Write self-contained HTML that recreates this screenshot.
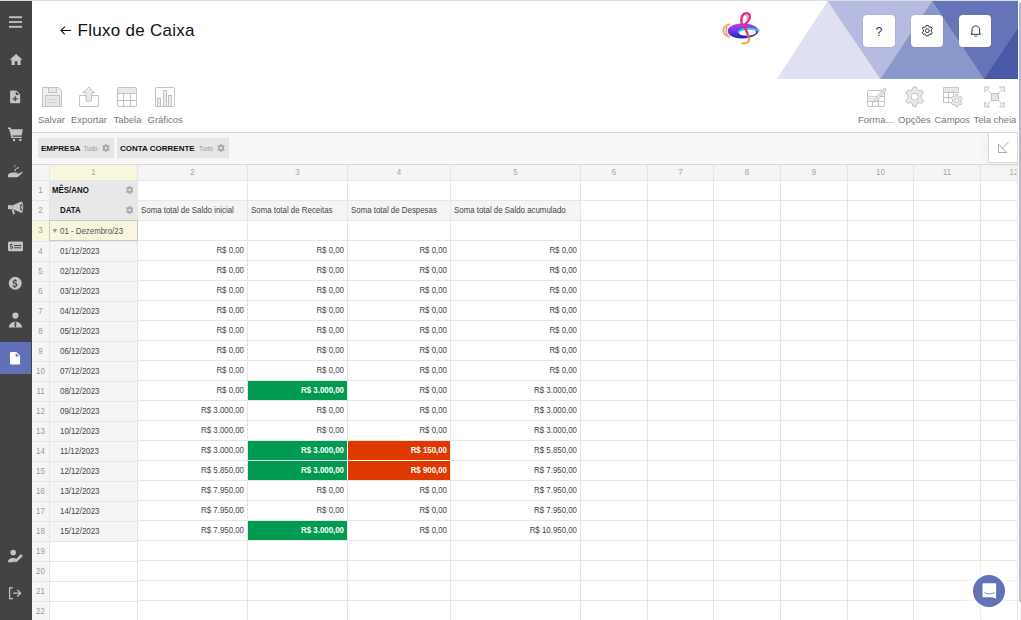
<!DOCTYPE html><html><head><meta charset="utf-8"><style>*{margin:0;padding:0;box-sizing:border-box}
html,body{width:1021px;height:620px;overflow:hidden;background:#fff;font-family:"Liberation Sans",sans-serif}
.abs{position:absolute}
#topline{position:absolute;left:0;top:0;width:1021px;height:1px;background:#dcdde0}
#side{position:absolute;left:0;top:1px;width:32px;height:619px;background:#434343}
#side svg{position:absolute;overflow:visible}
#scroll{position:absolute;left:1019px;top:2px;width:2px;height:600px;background:#bcbcc4;border-radius:1px}
.title{position:absolute;left:77.5px;top:21px;font-size:17px;letter-spacing:0.28px;color:#111;white-space:nowrap}
.hbtn{position:absolute;top:15px;width:31.5px;height:31.5px;background:#fff;border-radius:4px;box-shadow:0 0 0 0.6px rgba(120,100,80,0.18)}
.tb{position:absolute;top:114px;font-size:9.5px;color:#777;white-space:nowrap}
#filter{position:absolute;left:32px;top:133px;width:986px;height:31px;background:#f7f7f7}
#tbline{position:absolute;left:32px;top:132px;width:986px;height:1px;background:#d9d9d9}
.chip{position:absolute;top:5px;height:20px;background:#e6e6e6}
.chip b{position:absolute;top:6px;font-size:8px;color:#111;white-space:nowrap}
.chip i{position:absolute;top:7px;font-style:normal;font-size:6.3px;color:#999;white-space:nowrap}
.c{position:absolute;font-size:8px;color:#444;white-space:nowrap;line-height:20px;height:20px;overflow:hidden;transform:scale(0.985,1.15);transform-origin:0 13.5px}
</style></head><body>
<div id="topline"></div>
<div id="gridwrap"><div class="abs" style="left:32px;top:165px;width:986px;height:15px;background:#f5f5f5;"></div><div class="abs" style="left:32px;top:165px;width:17px;height:455px;background:#f5f5f5;"></div><div class="abs" style="left:50px;top:165px;width:87px;height:15px;background:#f8f6dc;"></div><div class="abs" style="left:32px;top:221px;width:17px;height:19px;background:#f8f6dc;"></div><div class="abs" style="left:138px;top:201px;width:442px;height:19px;background:#f5f5f5;"></div><div class="abs" style="left:50px;top:242px;width:87px;height:299px;background:#f5f5f5;"></div><div class="abs" style="left:49px;top:165px;width:1px;height:455px;background:#e6e6e6;"></div><div class="abs" style="left:137px;top:165px;width:1px;height:455px;background:#e6e6e6;"></div><div class="abs" style="left:247px;top:165px;width:1px;height:455px;background:#e6e6e6;"></div><div class="abs" style="left:347px;top:165px;width:1px;height:455px;background:#e6e6e6;"></div><div class="abs" style="left:450px;top:165px;width:1px;height:455px;background:#e6e6e6;"></div><div class="abs" style="left:580px;top:165px;width:1px;height:455px;background:#e6e6e6;"></div><div class="abs" style="left:647px;top:165px;width:1px;height:455px;background:#e6e6e6;"></div><div class="abs" style="left:713px;top:165px;width:1px;height:455px;background:#e6e6e6;"></div><div class="abs" style="left:780px;top:165px;width:1px;height:455px;background:#e6e6e6;"></div><div class="abs" style="left:847px;top:165px;width:1px;height:455px;background:#e6e6e6;"></div><div class="abs" style="left:913px;top:165px;width:1px;height:455px;background:#e6e6e6;"></div><div class="abs" style="left:980px;top:165px;width:1px;height:455px;background:#e6e6e6;"></div><div class="abs" style="left:1017px;top:165px;width:1px;height:455px;background:#e6e6e6;"></div><div class="abs" style="left:138px;top:180px;width:880px;height:1px;background:#e6e6e6;"></div><div class="abs" style="left:32px;top:180px;width:105px;height:1px;background:#e6e6e6;"></div><div class="abs" style="left:138px;top:200px;width:880px;height:1px;background:#e6e6e6;"></div><div class="abs" style="left:32px;top:200px;width:105px;height:1px;background:#e6e6e6;"></div><div class="abs" style="left:138px;top:220px;width:880px;height:1px;background:#e6e6e6;"></div><div class="abs" style="left:32px;top:220px;width:105px;height:1px;background:#e6e6e6;"></div><div class="abs" style="left:138px;top:240px;width:880px;height:1px;background:#e6e6e6;"></div><div class="abs" style="left:32px;top:241px;width:105px;height:1px;background:#e6e6e6;"></div><div class="abs" style="left:138px;top:260px;width:880px;height:1px;background:#e6e6e6;"></div><div class="abs" style="left:32px;top:261px;width:105px;height:1px;background:#e6e6e6;"></div><div class="abs" style="left:138px;top:280px;width:880px;height:1px;background:#e6e6e6;"></div><div class="abs" style="left:32px;top:281px;width:105px;height:1px;background:#e6e6e6;"></div><div class="abs" style="left:138px;top:300px;width:880px;height:1px;background:#e6e6e6;"></div><div class="abs" style="left:32px;top:301px;width:105px;height:1px;background:#e6e6e6;"></div><div class="abs" style="left:138px;top:320px;width:880px;height:1px;background:#e6e6e6;"></div><div class="abs" style="left:32px;top:321px;width:105px;height:1px;background:#e6e6e6;"></div><div class="abs" style="left:138px;top:340px;width:880px;height:1px;background:#e6e6e6;"></div><div class="abs" style="left:32px;top:341px;width:105px;height:1px;background:#e6e6e6;"></div><div class="abs" style="left:138px;top:360px;width:880px;height:1px;background:#e6e6e6;"></div><div class="abs" style="left:32px;top:361px;width:105px;height:1px;background:#e6e6e6;"></div><div class="abs" style="left:138px;top:380px;width:880px;height:1px;background:#e6e6e6;"></div><div class="abs" style="left:32px;top:381px;width:105px;height:1px;background:#e6e6e6;"></div><div class="abs" style="left:138px;top:400px;width:880px;height:1px;background:#e6e6e6;"></div><div class="abs" style="left:32px;top:401px;width:105px;height:1px;background:#e6e6e6;"></div><div class="abs" style="left:138px;top:420px;width:880px;height:1px;background:#e6e6e6;"></div><div class="abs" style="left:32px;top:421px;width:105px;height:1px;background:#e6e6e6;"></div><div class="abs" style="left:138px;top:440px;width:880px;height:1px;background:#e6e6e6;"></div><div class="abs" style="left:32px;top:441px;width:105px;height:1px;background:#e6e6e6;"></div><div class="abs" style="left:138px;top:460px;width:880px;height:1px;background:#e6e6e6;"></div><div class="abs" style="left:32px;top:461px;width:105px;height:1px;background:#e6e6e6;"></div><div class="abs" style="left:138px;top:480px;width:880px;height:1px;background:#e6e6e6;"></div><div class="abs" style="left:32px;top:481px;width:105px;height:1px;background:#e6e6e6;"></div><div class="abs" style="left:138px;top:500px;width:880px;height:1px;background:#e6e6e6;"></div><div class="abs" style="left:32px;top:501px;width:105px;height:1px;background:#e6e6e6;"></div><div class="abs" style="left:138px;top:520px;width:880px;height:1px;background:#e6e6e6;"></div><div class="abs" style="left:32px;top:521px;width:105px;height:1px;background:#e6e6e6;"></div><div class="abs" style="left:138px;top:540px;width:880px;height:1px;background:#e6e6e6;"></div><div class="abs" style="left:32px;top:541px;width:105px;height:1px;background:#e6e6e6;"></div><div class="abs" style="left:138px;top:560px;width:880px;height:1px;background:#e6e6e6;"></div><div class="abs" style="left:32px;top:561px;width:105px;height:1px;background:#e6e6e6;"></div><div class="abs" style="left:138px;top:580px;width:880px;height:1px;background:#e6e6e6;"></div><div class="abs" style="left:32px;top:581px;width:105px;height:1px;background:#e6e6e6;"></div><div class="abs" style="left:138px;top:600px;width:880px;height:1px;background:#e6e6e6;"></div><div class="abs" style="left:32px;top:601px;width:105px;height:1px;background:#e6e6e6;"></div><div class="abs" style="left:138px;top:620px;width:880px;height:1px;background:#e6e6e6;"></div><div class="abs" style="left:32px;top:621px;width:105px;height:1px;background:#e6e6e6;"></div><div class="abs" style="left:32px;top:164px;width:986px;height:1px;background:#d8d8d8;"></div><div class="abs" style="left:50px;top:181px;width:87px;height:40px;background:#e8e8e8;"></div><div class="abs" style="left:49px;top:220px;width:89px;height:21px;background:#c9c9c9;"></div><div class="abs" style="left:50px;top:221px;width:87px;height:19px;background:#f8f6dc;"></div><div class="abs" style="left:248px;top:381px;width:99px;height:19px;background:#009a50;"></div><div class="abs" style="left:248px;top:441px;width:99px;height:19px;background:#009a50;"></div><div class="abs" style="left:248px;top:461px;width:99px;height:19px;background:#009a50;"></div><div class="abs" style="left:248px;top:521px;width:99px;height:19px;background:#009a50;"></div><div class="abs" style="left:348px;top:441px;width:102px;height:19px;background:#de3a00;"></div><div class="abs" style="left:348px;top:461px;width:102px;height:19px;background:#de3a00;"></div><div class="abs" style="left:347px;top:441px;width:1px;height:39px;background:#fff;"></div><div class="abs" style="left:248px;top:460px;width:202px;height:1px;background:#fff;"></div><div class="c" style="left:50px;top:163px;width:87px;text-align:center;color:#a4a4a4;font-weight:normal;font-size:8px;transform-origin:50% 13.5px">1</div><div class="c" style="left:138px;top:163px;width:109px;text-align:center;color:#a4a4a4;font-weight:normal;font-size:8px;transform-origin:50% 13.5px">2</div><div class="c" style="left:248px;top:163px;width:99px;text-align:center;color:#a4a4a4;font-weight:normal;font-size:8px;transform-origin:50% 13.5px">3</div><div class="c" style="left:348px;top:163px;width:102px;text-align:center;color:#a4a4a4;font-weight:normal;font-size:8px;transform-origin:50% 13.5px">4</div><div class="c" style="left:451px;top:163px;width:129px;text-align:center;color:#a4a4a4;font-weight:normal;font-size:8px;transform-origin:50% 13.5px">5</div><div class="c" style="left:581px;top:163px;width:66px;text-align:center;color:#a4a4a4;font-weight:normal;font-size:8px;transform-origin:50% 13.5px">6</div><div class="c" style="left:648px;top:163px;width:65px;text-align:center;color:#a4a4a4;font-weight:normal;font-size:8px;transform-origin:50% 13.5px">7</div><div class="c" style="left:714px;top:163px;width:66px;text-align:center;color:#a4a4a4;font-weight:normal;font-size:8px;transform-origin:50% 13.5px">8</div><div class="c" style="left:781px;top:163px;width:66px;text-align:center;color:#a4a4a4;font-weight:normal;font-size:8px;transform-origin:50% 13.5px">9</div><div class="c" style="left:848px;top:163px;width:65px;text-align:center;color:#a4a4a4;font-weight:normal;font-size:8px;transform-origin:50% 13.5px">10</div><div class="c" style="left:914px;top:163px;width:66px;text-align:center;color:#a4a4a4;font-weight:normal;font-size:8px;transform-origin:50% 13.5px">11</div><div class="c" style="left:981px;top:163px;width:36px;text-align:left;color:#a4a4a4;font-weight:normal;font-size:8px;transform-origin:0 13.5px"><span style='position:absolute;left:29px'>12</span></div><div class="c" style="left:32px;top:181px;width:17px;text-align:center;color:#999;font-weight:normal;font-size:8px;transform-origin:50% 13.5px">1</div><div class="c" style="left:32px;top:201px;width:17px;text-align:center;color:#999;font-weight:normal;font-size:8px;transform-origin:50% 13.5px">2</div><div class="c" style="left:32px;top:221px;width:17px;text-align:center;color:#999;font-weight:normal;font-size:8px;transform-origin:50% 13.5px">3</div><div class="c" style="left:32px;top:242px;width:17px;text-align:center;color:#999;font-weight:normal;font-size:8px;transform-origin:50% 13.5px">4</div><div class="c" style="left:32px;top:262px;width:17px;text-align:center;color:#999;font-weight:normal;font-size:8px;transform-origin:50% 13.5px">5</div><div class="c" style="left:32px;top:282px;width:17px;text-align:center;color:#999;font-weight:normal;font-size:8px;transform-origin:50% 13.5px">6</div><div class="c" style="left:32px;top:302px;width:17px;text-align:center;color:#999;font-weight:normal;font-size:8px;transform-origin:50% 13.5px">7</div><div class="c" style="left:32px;top:322px;width:17px;text-align:center;color:#999;font-weight:normal;font-size:8px;transform-origin:50% 13.5px">8</div><div class="c" style="left:32px;top:342px;width:17px;text-align:center;color:#999;font-weight:normal;font-size:8px;transform-origin:50% 13.5px">9</div><div class="c" style="left:32px;top:362px;width:17px;text-align:center;color:#999;font-weight:normal;font-size:8px;transform-origin:50% 13.5px">10</div><div class="c" style="left:32px;top:382px;width:17px;text-align:center;color:#999;font-weight:normal;font-size:8px;transform-origin:50% 13.5px">11</div><div class="c" style="left:32px;top:402px;width:17px;text-align:center;color:#999;font-weight:normal;font-size:8px;transform-origin:50% 13.5px">12</div><div class="c" style="left:32px;top:422px;width:17px;text-align:center;color:#999;font-weight:normal;font-size:8px;transform-origin:50% 13.5px">13</div><div class="c" style="left:32px;top:442px;width:17px;text-align:center;color:#999;font-weight:normal;font-size:8px;transform-origin:50% 13.5px">14</div><div class="c" style="left:32px;top:462px;width:17px;text-align:center;color:#999;font-weight:normal;font-size:8px;transform-origin:50% 13.5px">15</div><div class="c" style="left:32px;top:482px;width:17px;text-align:center;color:#999;font-weight:normal;font-size:8px;transform-origin:50% 13.5px">16</div><div class="c" style="left:32px;top:502px;width:17px;text-align:center;color:#999;font-weight:normal;font-size:8px;transform-origin:50% 13.5px">17</div><div class="c" style="left:32px;top:522px;width:17px;text-align:center;color:#999;font-weight:normal;font-size:8px;transform-origin:50% 13.5px">18</div><div class="c" style="left:32px;top:542px;width:17px;text-align:center;color:#999;font-weight:normal;font-size:8px;transform-origin:50% 13.5px">19</div><div class="c" style="left:32px;top:562px;width:17px;text-align:center;color:#999;font-weight:normal;font-size:8px;transform-origin:50% 13.5px">20</div><div class="c" style="left:32px;top:582px;width:17px;text-align:center;color:#999;font-weight:normal;font-size:8px;transform-origin:50% 13.5px">21</div><div class="c" style="left:32px;top:602px;width:17px;text-align:center;color:#999;font-weight:normal;font-size:8px;transform-origin:50% 13.5px">22</div><div class="c" style="left:52px;top:181px;width:70px;text-align:left;color:#111;font-weight:bold;font-size:8px;transform-origin:0 13.5px">MÊS/ANO</div><div class="c" style="left:60px;top:201px;width:60px;text-align:left;color:#111;font-weight:bold;font-size:8px;transform-origin:0 13.5px">DATA</div><div class="c" style="left:141px;top:201px;width:106px;text-align:left;color:#444;font-weight:normal;font-size:8px;transform-origin:0 13.5px">Soma total de Saldo inicial</div><div class="c" style="left:251px;top:201px;width:96px;text-align:left;color:#444;font-weight:normal;font-size:8px;transform-origin:0 13.5px">Soma total de Receitas</div><div class="c" style="left:351px;top:201px;width:99px;text-align:left;color:#444;font-weight:normal;font-size:8px;transform-origin:0 13.5px">Soma total de Despesas</div><div class="c" style="left:454px;top:201px;width:126px;text-align:left;color:#444;font-weight:normal;font-size:8px;transform-origin:0 13.5px">Soma total de Saldo acumulado</div><div class="c" style="left:60px;top:222px;width:76px;text-align:left;color:#555;font-weight:normal;font-size:8px;transform-origin:0 13.5px">01 - Dezembro/23</div><div class="c" style="left:60px;top:242px;width:76px;text-align:left;color:#444;font-weight:normal;font-size:8px;transform-origin:0 13.5px">01/12/2023</div><div class="c" style="left:138px;top:241px;width:106px;text-align:right;color:#444;font-weight:normal;font-size:8px;transform-origin:100% 13.5px">R$ 0,00</div><div class="c" style="left:248px;top:241px;width:96px;text-align:right;color:#444;font-weight:normal;font-size:8px;transform-origin:100% 13.5px">R$ 0,00</div><div class="c" style="left:348px;top:241px;width:99px;text-align:right;color:#444;font-weight:normal;font-size:8px;transform-origin:100% 13.5px">R$ 0,00</div><div class="c" style="left:451px;top:241px;width:126px;text-align:right;color:#444;font-weight:normal;font-size:8px;transform-origin:100% 13.5px">R$ 0,00</div><div class="c" style="left:60px;top:262px;width:76px;text-align:left;color:#444;font-weight:normal;font-size:8px;transform-origin:0 13.5px">02/12/2023</div><div class="c" style="left:138px;top:261px;width:106px;text-align:right;color:#444;font-weight:normal;font-size:8px;transform-origin:100% 13.5px">R$ 0,00</div><div class="c" style="left:248px;top:261px;width:96px;text-align:right;color:#444;font-weight:normal;font-size:8px;transform-origin:100% 13.5px">R$ 0,00</div><div class="c" style="left:348px;top:261px;width:99px;text-align:right;color:#444;font-weight:normal;font-size:8px;transform-origin:100% 13.5px">R$ 0,00</div><div class="c" style="left:451px;top:261px;width:126px;text-align:right;color:#444;font-weight:normal;font-size:8px;transform-origin:100% 13.5px">R$ 0,00</div><div class="c" style="left:60px;top:282px;width:76px;text-align:left;color:#444;font-weight:normal;font-size:8px;transform-origin:0 13.5px">03/12/2023</div><div class="c" style="left:138px;top:281px;width:106px;text-align:right;color:#444;font-weight:normal;font-size:8px;transform-origin:100% 13.5px">R$ 0,00</div><div class="c" style="left:248px;top:281px;width:96px;text-align:right;color:#444;font-weight:normal;font-size:8px;transform-origin:100% 13.5px">R$ 0,00</div><div class="c" style="left:348px;top:281px;width:99px;text-align:right;color:#444;font-weight:normal;font-size:8px;transform-origin:100% 13.5px">R$ 0,00</div><div class="c" style="left:451px;top:281px;width:126px;text-align:right;color:#444;font-weight:normal;font-size:8px;transform-origin:100% 13.5px">R$ 0,00</div><div class="c" style="left:60px;top:302px;width:76px;text-align:left;color:#444;font-weight:normal;font-size:8px;transform-origin:0 13.5px">04/12/2023</div><div class="c" style="left:138px;top:301px;width:106px;text-align:right;color:#444;font-weight:normal;font-size:8px;transform-origin:100% 13.5px">R$ 0,00</div><div class="c" style="left:248px;top:301px;width:96px;text-align:right;color:#444;font-weight:normal;font-size:8px;transform-origin:100% 13.5px">R$ 0,00</div><div class="c" style="left:348px;top:301px;width:99px;text-align:right;color:#444;font-weight:normal;font-size:8px;transform-origin:100% 13.5px">R$ 0,00</div><div class="c" style="left:451px;top:301px;width:126px;text-align:right;color:#444;font-weight:normal;font-size:8px;transform-origin:100% 13.5px">R$ 0,00</div><div class="c" style="left:60px;top:322px;width:76px;text-align:left;color:#444;font-weight:normal;font-size:8px;transform-origin:0 13.5px">05/12/2023</div><div class="c" style="left:138px;top:321px;width:106px;text-align:right;color:#444;font-weight:normal;font-size:8px;transform-origin:100% 13.5px">R$ 0,00</div><div class="c" style="left:248px;top:321px;width:96px;text-align:right;color:#444;font-weight:normal;font-size:8px;transform-origin:100% 13.5px">R$ 0,00</div><div class="c" style="left:348px;top:321px;width:99px;text-align:right;color:#444;font-weight:normal;font-size:8px;transform-origin:100% 13.5px">R$ 0,00</div><div class="c" style="left:451px;top:321px;width:126px;text-align:right;color:#444;font-weight:normal;font-size:8px;transform-origin:100% 13.5px">R$ 0,00</div><div class="c" style="left:60px;top:342px;width:76px;text-align:left;color:#444;font-weight:normal;font-size:8px;transform-origin:0 13.5px">06/12/2023</div><div class="c" style="left:138px;top:341px;width:106px;text-align:right;color:#444;font-weight:normal;font-size:8px;transform-origin:100% 13.5px">R$ 0,00</div><div class="c" style="left:248px;top:341px;width:96px;text-align:right;color:#444;font-weight:normal;font-size:8px;transform-origin:100% 13.5px">R$ 0,00</div><div class="c" style="left:348px;top:341px;width:99px;text-align:right;color:#444;font-weight:normal;font-size:8px;transform-origin:100% 13.5px">R$ 0,00</div><div class="c" style="left:451px;top:341px;width:126px;text-align:right;color:#444;font-weight:normal;font-size:8px;transform-origin:100% 13.5px">R$ 0,00</div><div class="c" style="left:60px;top:362px;width:76px;text-align:left;color:#444;font-weight:normal;font-size:8px;transform-origin:0 13.5px">07/12/2023</div><div class="c" style="left:138px;top:361px;width:106px;text-align:right;color:#444;font-weight:normal;font-size:8px;transform-origin:100% 13.5px">R$ 0,00</div><div class="c" style="left:248px;top:361px;width:96px;text-align:right;color:#444;font-weight:normal;font-size:8px;transform-origin:100% 13.5px">R$ 0,00</div><div class="c" style="left:348px;top:361px;width:99px;text-align:right;color:#444;font-weight:normal;font-size:8px;transform-origin:100% 13.5px">R$ 0,00</div><div class="c" style="left:451px;top:361px;width:126px;text-align:right;color:#444;font-weight:normal;font-size:8px;transform-origin:100% 13.5px">R$ 0,00</div><div class="c" style="left:60px;top:382px;width:76px;text-align:left;color:#444;font-weight:normal;font-size:8px;transform-origin:0 13.5px">08/12/2023</div><div class="c" style="left:138px;top:381px;width:106px;text-align:right;color:#444;font-weight:normal;font-size:8px;transform-origin:100% 13.5px">R$ 0,00</div><div class="c" style="left:248px;top:381px;width:96px;text-align:right;color:#fff;font-weight:bold;font-size:8px;transform-origin:100% 13.5px">R$ 3.000,00</div><div class="c" style="left:348px;top:381px;width:99px;text-align:right;color:#444;font-weight:normal;font-size:8px;transform-origin:100% 13.5px">R$ 0,00</div><div class="c" style="left:451px;top:381px;width:126px;text-align:right;color:#444;font-weight:normal;font-size:8px;transform-origin:100% 13.5px">R$ 3.000,00</div><div class="c" style="left:60px;top:402px;width:76px;text-align:left;color:#444;font-weight:normal;font-size:8px;transform-origin:0 13.5px">09/12/2023</div><div class="c" style="left:138px;top:401px;width:106px;text-align:right;color:#444;font-weight:normal;font-size:8px;transform-origin:100% 13.5px">R$ 3.000,00</div><div class="c" style="left:248px;top:401px;width:96px;text-align:right;color:#444;font-weight:normal;font-size:8px;transform-origin:100% 13.5px">R$ 0,00</div><div class="c" style="left:348px;top:401px;width:99px;text-align:right;color:#444;font-weight:normal;font-size:8px;transform-origin:100% 13.5px">R$ 0,00</div><div class="c" style="left:451px;top:401px;width:126px;text-align:right;color:#444;font-weight:normal;font-size:8px;transform-origin:100% 13.5px">R$ 3.000,00</div><div class="c" style="left:60px;top:422px;width:76px;text-align:left;color:#444;font-weight:normal;font-size:8px;transform-origin:0 13.5px">10/12/2023</div><div class="c" style="left:138px;top:421px;width:106px;text-align:right;color:#444;font-weight:normal;font-size:8px;transform-origin:100% 13.5px">R$ 3.000,00</div><div class="c" style="left:248px;top:421px;width:96px;text-align:right;color:#444;font-weight:normal;font-size:8px;transform-origin:100% 13.5px">R$ 0,00</div><div class="c" style="left:348px;top:421px;width:99px;text-align:right;color:#444;font-weight:normal;font-size:8px;transform-origin:100% 13.5px">R$ 0,00</div><div class="c" style="left:451px;top:421px;width:126px;text-align:right;color:#444;font-weight:normal;font-size:8px;transform-origin:100% 13.5px">R$ 3.000,00</div><div class="c" style="left:60px;top:442px;width:76px;text-align:left;color:#444;font-weight:normal;font-size:8px;transform-origin:0 13.5px">11/12/2023</div><div class="c" style="left:138px;top:441px;width:106px;text-align:right;color:#444;font-weight:normal;font-size:8px;transform-origin:100% 13.5px">R$ 3.000,00</div><div class="c" style="left:248px;top:441px;width:96px;text-align:right;color:#fff;font-weight:bold;font-size:8px;transform-origin:100% 13.5px">R$ 3.000,00</div><div class="c" style="left:348px;top:441px;width:99px;text-align:right;color:#fff;font-weight:bold;font-size:8px;transform-origin:100% 13.5px">R$ 150,00</div><div class="c" style="left:451px;top:441px;width:126px;text-align:right;color:#444;font-weight:normal;font-size:8px;transform-origin:100% 13.5px">R$ 5.850,00</div><div class="c" style="left:60px;top:462px;width:76px;text-align:left;color:#444;font-weight:normal;font-size:8px;transform-origin:0 13.5px">12/12/2023</div><div class="c" style="left:138px;top:461px;width:106px;text-align:right;color:#444;font-weight:normal;font-size:8px;transform-origin:100% 13.5px">R$ 5.850,00</div><div class="c" style="left:248px;top:461px;width:96px;text-align:right;color:#fff;font-weight:bold;font-size:8px;transform-origin:100% 13.5px">R$ 3.000,00</div><div class="c" style="left:348px;top:461px;width:99px;text-align:right;color:#fff;font-weight:bold;font-size:8px;transform-origin:100% 13.5px">R$ 900,00</div><div class="c" style="left:451px;top:461px;width:126px;text-align:right;color:#444;font-weight:normal;font-size:8px;transform-origin:100% 13.5px">R$ 7.950,00</div><div class="c" style="left:60px;top:482px;width:76px;text-align:left;color:#444;font-weight:normal;font-size:8px;transform-origin:0 13.5px">13/12/2023</div><div class="c" style="left:138px;top:481px;width:106px;text-align:right;color:#444;font-weight:normal;font-size:8px;transform-origin:100% 13.5px">R$ 7.950,00</div><div class="c" style="left:248px;top:481px;width:96px;text-align:right;color:#444;font-weight:normal;font-size:8px;transform-origin:100% 13.5px">R$ 0,00</div><div class="c" style="left:348px;top:481px;width:99px;text-align:right;color:#444;font-weight:normal;font-size:8px;transform-origin:100% 13.5px">R$ 0,00</div><div class="c" style="left:451px;top:481px;width:126px;text-align:right;color:#444;font-weight:normal;font-size:8px;transform-origin:100% 13.5px">R$ 7.950,00</div><div class="c" style="left:60px;top:502px;width:76px;text-align:left;color:#444;font-weight:normal;font-size:8px;transform-origin:0 13.5px">14/12/2023</div><div class="c" style="left:138px;top:501px;width:106px;text-align:right;color:#444;font-weight:normal;font-size:8px;transform-origin:100% 13.5px">R$ 7.950,00</div><div class="c" style="left:248px;top:501px;width:96px;text-align:right;color:#444;font-weight:normal;font-size:8px;transform-origin:100% 13.5px">R$ 0,00</div><div class="c" style="left:348px;top:501px;width:99px;text-align:right;color:#444;font-weight:normal;font-size:8px;transform-origin:100% 13.5px">R$ 0,00</div><div class="c" style="left:451px;top:501px;width:126px;text-align:right;color:#444;font-weight:normal;font-size:8px;transform-origin:100% 13.5px">R$ 7.950,00</div><div class="c" style="left:60px;top:522px;width:76px;text-align:left;color:#444;font-weight:normal;font-size:8px;transform-origin:0 13.5px">15/12/2023</div><div class="c" style="left:138px;top:521px;width:106px;text-align:right;color:#444;font-weight:normal;font-size:8px;transform-origin:100% 13.5px">R$ 7.950,00</div><div class="c" style="left:248px;top:521px;width:96px;text-align:right;color:#fff;font-weight:bold;font-size:8px;transform-origin:100% 13.5px">R$ 3.000,00</div><div class="c" style="left:348px;top:521px;width:99px;text-align:right;color:#444;font-weight:normal;font-size:8px;transform-origin:100% 13.5px">R$ 0,00</div><div class="c" style="left:451px;top:521px;width:126px;text-align:right;color:#444;font-weight:normal;font-size:8px;transform-origin:100% 13.5px">R$ 10.950,00</div></div>
<div id="side"></div>
<svg class="abs" style="left:0;top:0" width="1021" height="620" viewBox="0 0 1021 620">
 <!-- header triangles -->
 <g>
  <polygon points="827.6,1 1018,1 1018,79 853,79" fill="#b6bbe1"/>
  <polygon points="827.6,1 776.9,79 880.4,79" fill="#dfe0f1"/>
  <polygon points="932.3,1 1018,1 1018,79 880.4,79" fill="#8a97cb"/>
  <polygon points="932.3,1 1018,1 1018,79 984.2,79" fill="#6574b9"/>
  <polygon points="1036,1 984.2,79 1088,79" fill="#4a59a7"/>
  <rect x="1018" y="0" width="10" height="90" fill="#fff"/>
 </g>
 <!-- sidebar active -->
 <rect x="0" y="342" width="31" height="32" fill="#6270b8"/>
 <g fill="#c4c4c4">
  <!-- hamburger -->
  <rect x="9" y="16.3" width="13" height="1.8"/>
  <rect x="9" y="21.1" width="13" height="1.8"/>
  <rect x="9" y="25.9" width="13" height="1.8"/>
  <!-- home -->
  <path transform="translate(8.3,52.05) scale(0.65)" d="M10 20v-6h4v6h5v-8h3L12 3 2 12h3v8z"/>
  <!-- note add -->
  <path transform="translate(7.58,89.34) scale(0.63)" d="M14 2H6c-1.1 0-1.99.9-1.99 2L4 20c0 1.1.89 2 1.99 2H18c1.1 0 2-.9 2-2V8l-6-6zm2 14h-3v3h-2v-3H8v-2h3v-3h2v3h3v2zm-3-7V3.5L18.5 9H13z"/>
  <!-- cart -->
  <path d="M7.9 127.6h2.6l0.6 1.6h11.8l-1.3 6.3h-9.2l0.3 1.2h9v1.4h-10.2l-2.4-9.1h-1.2z"/>
  <circle cx="14" cy="140" r="1.2"/><circle cx="20.3" cy="140" r="1.2"/>
  <!-- hand with seedling -->
  <path d="M8 174.5c1.5-1.6 3.5-2.3 5.5-2h3.2c0.8 0 1.1 0.9 0.4 1.3l-2.6 0.3 3.8-0.3 3.3-1.9c0.7-0.3 1.2 0.4 0.8 0.9l-3.6 3.5c-0.6 0.6-1.4 0.9-2.3 0.9h-8.5z"/>
  <path d="M14.5 171.3c-0.3-1.3 0.3-2.3 1.6-2.6 0.3 1.3-0.3 2.3-1.6 2.6zM16.2 169c0.4-1.4 1.5-2.1 3-2-0.4 1.4-1.5 2.1-3 2zM14.8 167.5c-0.6-1-0.5-2.1 0.2-3.1 0.6 1 0.5 2.1-0.2 3.1z"/>
  <!-- megaphone -->
  <path d="M8 205.2h4.3v4h-4.3z"/>
  <path d="M12.3 205.4l8.9-3.8v11.2l-8.9-3.8z"/>
  <ellipse cx="21.2" cy="207.2" rx="2" ry="5.6"/>
  <ellipse cx="21.2" cy="207.2" rx="1.1" ry="3.4" fill="#434343"/>
  <ellipse cx="21.3" cy="207.2" rx="0.5" ry="2" fill="#c4c4c4"/>
  <path d="M11.5 209.5h2.2l1.2 4.6-1.6 0.5z"/>
  <!-- card -->
  <rect x="8" y="241.5" width="15" height="9.7" rx="1.5"/>
  <!-- dollar circle -->
  <circle cx="15.25" cy="283.25" r="6.45"/>
  <!-- person -->
  <circle cx="15.4" cy="315.6" r="3.1"/>
  <path d="M8.8 327.6c0-3.4 2.9-5.8 6.6-5.8s6.6 2.4 6.6 5.8z"/>
  <!-- user edit -->
  <circle cx="13.2" cy="552.6" r="2.8"/>
  <path d="M7.9 562.3c0-2.6 2.1-4.4 5.3-4.4 1.4 0 2.6 0.3 3.5 0.9l-3.1 3.5z"/>
  <path d="M14.6 562.3l0.4-2 6-6.2 1.8 1.8-6.2 6.1z"/>
  <!-- logout -->
  <path d="M9 587.3h4v1.2h-2.8v9.5h2.8v1.2h-4z"/>
  <path d="M13.2 592.6h5.9l-2.2-2.2 0.9-0.9 3.7 3.7-3.7 3.7-0.9-0.9 2.2-2.2h-5.9z"/>
 </g>
 <g fill="#434343">
  <!-- card details -->
  <path d="M11.3 243.3v0.8c-0.9 0.1-1.4 0.6-1.4 1.3 0 0.8 0.6 1.1 1.4 1.3 0.6 0.2 0.8 0.3 0.8 0.6s-0.3 0.5-0.8 0.5c-0.4 0-0.8-0.2-1.1-0.4l-0.4 0.7c0.3 0.2 0.7 0.4 1.1 0.4v0.8h0.7v-0.8c0.9-0.1 1.4-0.6 1.4-1.3 0-0.8-0.6-1.1-1.4-1.3-0.5-0.1-0.8-0.3-0.8-0.5 0-0.3 0.3-0.5 0.7-0.5 0.3 0 0.6 0.1 0.9 0.3l0.4-0.6c-0.3-0.2-0.6-0.3-1-0.4v-0.8z"/>
  <rect x="14" y="245" width="7.3" height="1"/>
  <rect x="14" y="247.3" width="7.3" height="1"/>
  <!-- dollar -->
  <path d="M14.7 278.8v1.1c-1.3 0.2-2.1 1-2.1 2 0 1.2 0.9 1.7 2.1 2 0.9 0.2 1.3 0.5 1.3 1s-0.5 0.8-1.2 0.8c-0.7 0-1.3-0.3-1.8-0.7l-0.6 1.1c0.5 0.4 1.2 0.7 1.8 0.8v1.1h1.1v-1.1c1.3-0.2 2.1-1 2.1-2.1 0-1.2-0.9-1.7-2.1-2-0.9-0.2-1.3-0.4-1.3-0.9 0-0.4 0.4-0.7 1-0.7 0.5 0 1 0.2 1.5 0.5l0.5-1c-0.4-0.3-1-0.5-1.5-0.6v-1.1z"/>
  <!-- person tie -->
  <path d="M14.8 322.2h1.2l0.4 1.2-0.5 3.8h-1l-0.5-3.8z"/>
  <path d="M9.6 327.6l0.8-2.4 1 2.4zM21.2 327.6l-0.8-2.4-1 2.4z" opacity="0.0"/>
 </g>
 <!-- active doc -->
 <path fill="#fff" transform="translate(7.48,350.74) scale(0.63)" d="M6 2c-1.1 0-1.99.9-1.99 2L4 20c0 1.1.89 2 1.99 2H18c1.1 0 2-.9 2-2V8l-6-6H6zm7 7V3.5L18.5 9H13z"/>
</svg>

<div class="title">Fluxo de Caixa</div>
<svg class="abs" style="left:0;top:0" width="100" height="50"><path d="M71,30.5 H61 M64.8,26.7 L61,30.5 L64.8,34.3" fill="none" stroke="#111" stroke-width="1.1"/></svg>
<div id="tbline"></div>
<div id="filter">
 <div class="chip" style="left:6px;width:76px"><b style="left:3px">EMPRESA</b><i style="left:45.5px">Tudo</i></div>
 <div class="chip" style="left:85px;width:112px"><b style="left:3px">CONTA CORRENTE</b><i style="left:82px">Tudo</i></div>
</div>

<div id="scroll"></div>
<!-- header buttons -->
<div class="hbtn" style="left:863px"></div>
<div class="hbtn" style="left:911px"></div>
<div class="hbtn" style="left:959px"></div>
<div class="abs" style="left:863.5px;top:24.5px;width:31px;text-align:center;font-size:12.5px;color:#333">?</div>
<svg class="abs" style="left:0;top:0" width="1021" height="620" viewBox="0 0 1021 620">
 <!-- header gear -->
 <g transform="translate(927.3,30.7)" fill="none" stroke="#333" stroke-width="1">
  <path d="M-1.1,-5.2 L1.1,-5.2 L1.5,-3.9 L2.6,-3.3 L3.9,-3.8 L5,-1.9 L4,-1 L4,1 L5,1.9 L3.9,3.8 L2.6,3.3 L1.5,3.9 L1.1,5.2 L-1.1,5.2 L-1.5,3.9 L-2.6,3.3 L-3.9,3.8 L-5,1.9 L-4,1 L-4,-1 L-5,-1.9 L-3.9,-3.8 L-2.6,-3.3 L-1.5,-3.9 Z" stroke-linejoin="round"/>
  <circle cx="0" cy="0" r="1.9"/>
 </g>
 <!-- bell -->
 <g transform="translate(975.8,30.7)" fill="none" stroke="#333" stroke-width="1">
  <path d="M-4.8,3.6 L-3.8,2.4 L-3.8,-0.6 C-3.8,-3.2 -2.2,-4.8 0,-4.8 C2.2,-4.8 3.8,-3.2 3.8,-0.6 L3.8,2.4 L4.8,3.6 Z" stroke-linejoin="round"/>
  <path d="M-1.3,5 C-0.9,5.9 0.9,5.9 1.3,5"/>
 </g>
 <!-- toolbar icons -->
 <g fill="#f0f0f0" stroke="#c2c2c2" stroke-width="1">
  <!-- save -->
  <path d="M42.5,87.5 h15.8 l3.2,3.2 v15.8 h-19 z" stroke-linejoin="round"/>
  <rect x="48.5" y="87.5" width="8" height="5" fill="#e8e8e8"/>
  <rect x="45.5" y="95.5" width="14" height="11" fill="#e8e8e8"/>
  <path d="M47,99.5 h10 M47,102.5 h10" stroke="#d0d0d0"/>
  <!-- export -->
  <path d="M85.8,95.5 h-6.3 v11 h19 v-11 h-6.7" fill="none"/>
  <path d="M88.8,87 l6,5.8 h-3.3 v8.3 h-5.5 v-8.3 h-3.3 z" fill="#e8e8e8"/>
  <!-- table -->
  <rect x="117.5" y="87.5" width="19" height="19" rx="1" fill="#fff"/>
  <rect x="118" y="88" width="18" height="5.5" fill="#e8e8e8" stroke="none"/>
  <path d="M117.5,93.5 h19 M117.5,100.5 h19 M123.5,93.5 v13 M130.5,93.5 v13" fill="none"/>
  <!-- chart -->
  <rect x="155.5" y="87.5" width="19" height="19" rx="1" fill="#fff"/>
  <rect x="157.5" y="98.5" width="3" height="8" fill="#ececec"/>
  <rect x="163.5" y="90.5" width="3" height="16" fill="#ececec"/>
  <rect x="168.5" y="95.5" width="3" height="11" fill="#ececec"/>
  <!-- format -->
  <rect x="867.5" y="90.5" width="17" height="16" rx="0.8" fill="#fff"/>
  <path d="M867.5,96.5 h17 M867.5,101.5 h17 M872.5,96.5 v10 M878.5,96.5 v10" fill="none"/>
  <rect x="867.7" y="96.5" width="10.5" height="4.5" fill="#ececec" stroke="none"/>
  <path d="M874.5,99.8 l9.6,-11.2 c0.8,-0.9 2.6,0.5 1.9,1.5 l-9.6,11.2 l-2.5,0.8 z" fill="#ececec" stroke-linejoin="round"/>
  <!-- gear options -->
  <g transform="translate(914.7,96.7)">
   <path d="M-1.6,-9.6 L1.6,-9.6 L2.4,-6.9 L4.4,-5.8 L7.1,-6.5 L8.7,-3.7 L6.7,-1.7 L6.7,1.7 L8.7,3.7 L7.1,6.5 L4.4,5.8 L2.4,6.9 L1.6,9.6 L-1.6,9.6 L-2.4,6.9 L-4.4,5.8 L-7.1,6.5 L-8.7,3.7 L-6.7,1.7 L-6.7,-1.7 L-8.7,-3.7 L-7.1,-6.5 L-4.4,-5.8 L-2.4,-6.9 Z" fill="#e9e9e9" stroke-linejoin="round"/>
   <circle r="3.5" fill="#fff"/>
  </g>
  <!-- campos -->
  <path d="M958.5,92.5 v-5 h-15 v15 h8" fill="#fff"/>
  <rect x="943.8" y="87.8" width="14.4" height="4.6" fill="#e8e8e8" stroke="none"/>
  <path d="M943.5,92.5 h15 M943.5,97.5 h9 M948.5,92.5 v10 M953.5,92.5 v3" fill="none"/>
  <g transform="translate(956.7,100.6)">
   <path d="M-1,-6 L1,-6 L1.5,-4.3 L2.8,-3.6 L4.4,-4.1 L5.4,-2.3 L4.2,-1.1 L4.2,1.1 L5.4,2.3 L4.4,4.1 L2.8,3.6 L1.5,4.3 L1,6 L-1,6 L-1.5,4.3 L-2.8,3.6 L-4.4,4.1 L-5.4,2.3 L-4.2,1.1 L-4.2,-1.1 L-5.4,-2.3 L-4.4,-4.1 L-2.8,-3.6 L-1.5,-4.3 Z" fill="#ececec" stroke-linejoin="round"/>
   <circle r="2" fill="#fff"/>
  </g>
  <!-- fullscreen -->
  <rect x="991.5" y="93.5" width="7" height="7" fill="#e6e6e6"/>
  <path d="M991.3,93.3 L986,88 M998.6,93.3 L1003.9,88 M991.3,100.6 L986,105.9 M998.6,100.6 L1003.9,105.9" fill="none"/>
  <path d="M984.7,87 h4.8 l-4.8,4.8 z M1004.3,87 h-4.8 l4.8,4.8 z M984.7,106.9 h4.8 l-4.8,-4.8 z M1004.3,106.9 h-4.8 l4.8,-4.8 z" fill="#fff"/>
 </g>
</svg>
<div class="tb" style="left:38px">Salvar</div>
<div class="tb" style="left:71px">Exportar</div>
<div class="tb" style="left:113.5px">Tabela</div>
<div class="tb" style="left:147.5px">Gráficos</div>
<div class="tb" style="left:858px">Forma...</div>
<div class="tb" style="left:898px">Opções</div>
<div class="tb" style="left:934.5px">Campos</div>
<div class="tb" style="left:973.5px">Tela cheia</div>

<!-- collapse button -->
<div class="abs" style="left:988px;top:132px;width:30px;height:31px;background:#fff;border:1px solid #d8d8d8;box-shadow:0 0 12px rgba(0,0,0,0.06)"></div>
<svg class="abs" style="left:0;top:0" width="1021" height="620" viewBox="0 0 1021 620">
 <path d="M1008.6,142 L1002.3,148.3 M998.5,144.2 V152.5 H1006.7 Z" fill="none" stroke="#a8aab8" stroke-width="1" stroke-linejoin="miter"/>
 <!-- chip gears -->
 <g fill="#aaa">
  <g transform="translate(106,148)"><path id="sg" d="M-0.7,-4 L0.7,-4 L1,-2.9 L2,-2.4 L3,-2.9 L3.8,-1.7 L3,-0.9 L3,0.9 L3.8,1.7 L3,2.9 L2,2.4 L1,2.9 L0.7,4 L-0.7,4 L-1,2.9 L-2,2.4 L-3,2.9 L-3.8,1.7 L-3,0.9 L-3,-0.9 L-3.8,-1.7 L-3,-2.9 L-2,-2.4 L-1,-2.9 Z"/><circle r="1.2" fill="#e6e6e6"/></g>
  <g transform="translate(221,148)"><use href="#sg"/><circle r="1.2" fill="#e6e6e6"/></g>
  <g transform="translate(129.7,190)"><use href="#sg"/><circle r="1.2" fill="#e8e8e8"/></g>
  <g transform="translate(129.7,210)"><use href="#sg"/><circle r="1.2" fill="#e8e8e8"/></g>
 </g>
 <!-- row3 triangle -->
 <path d="M52.6,229 h4.6 l-2.3,4 z" fill="#999"/>
 <!-- logo -->
 <defs>
  <linearGradient id="lg1" x1="0" y1="0" x2="0" y2="1"><stop offset="0" stop-color="#b845ec"/><stop offset="0.5" stop-color="#6a3ae0"/><stop offset="1" stop-color="#2020b0"/></linearGradient>
  <linearGradient id="lg2" x1="0" y1="0" x2="0" y2="1"><stop offset="0" stop-color="#e8305c"/><stop offset="0.45" stop-color="#e0306a"/><stop offset="0.7" stop-color="#f09048"/><stop offset="1" stop-color="#f2b848"/></linearGradient>
 </defs>
 <g>
  <path d="M730,24.2 C725,25.2 722.5,28.5 723.5,31.8 C724.5,34.5 727.5,36.2 730,36.8" fill="none" stroke="#f2a858" stroke-width="1.9"/>
  <path d="M727.5,27 C725.5,29 725.5,32 727.5,34.5" fill="none" stroke="#e8406a" stroke-width="1"/>
  <path fill="url(#lg1)" fill-rule="evenodd" d="M727.7,31 C727.7,26 735,23.5 743,23.5 C752,23.5 758.5,27 758.5,31 C758.5,35 751,38.4 742.5,38.4 C734,38.4 727.7,35.5 727.7,31 Z M739,32.4 C739,29.8 742.5,28.4 747.5,28.4 C752.5,28.4 756,30 756,32 C756,34 752.5,35.6 747.5,35.6 C742.5,35.6 739,34.6 739,32.4 Z"/>
  <path d="M738,32.5 C741,28.5 752,27.3 759.5,30.6" fill="none" stroke="#38c4ea" stroke-width="2"/>
  <path d="M742.2,25 C740,19.5 742,13.5 746,13.2 C750,13 751,16.5 748.5,20.5 L744.2,25.5" fill="none" stroke="#e03080" stroke-width="2.4"/>
  <path d="M745.5,15.5 C748,15.3 748.5,17.5 746.5,20" fill="none" stroke="#e090f0" stroke-width="1.5"/>
  <path d="M744,25 C746,30 748,34 749,38.5 C749.8,42 746.5,44 741.5,43.3" fill="none" stroke="url(#lg2)" stroke-width="2.2"/>
 </g>
 <!-- chat button -->
 <defs><radialGradient id="glow"><stop offset="0.4" stop-color="#fff" stop-opacity="0.8"/><stop offset="1" stop-color="#fff" stop-opacity="0"/></radialGradient></defs>
 <circle cx="989" cy="591" r="34" fill="url(#glow)"/>
 <circle cx="989" cy="591" r="16" fill="#6371b9"/>
 <path d="M983.5,583.3 h11.6 c0.6,0 1,0.4 1,1 v14.5 l-3.8,-1.6 h-8.8 c-0.6,0 -1,-0.4 -1,-1 v-11.9 c0,-0.6 0.4,-1 1,-1z" fill="#fff"/>
 <path d="M984.7,592.6 c2.7,1.8 6.9,1.8 9.6,0" fill="none" stroke="#6371b9" stroke-width="0.9" stroke-linecap="round"/>
</svg>

</body></html>
